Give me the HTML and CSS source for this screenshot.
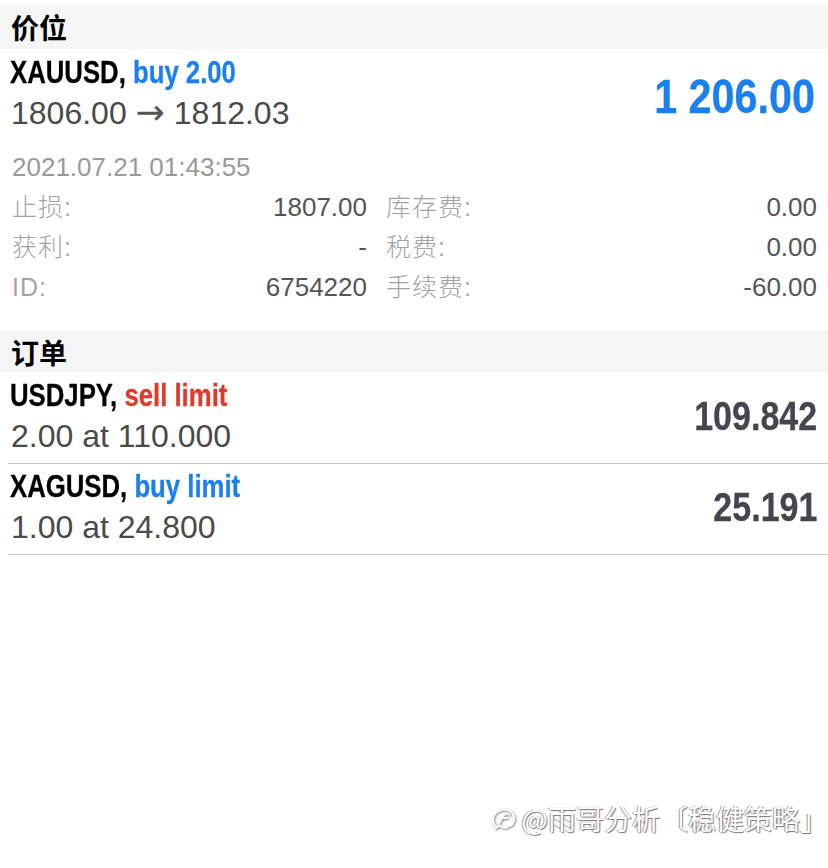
FILE: index.html
```html
<!DOCTYPE html>
<html lang="zh">

<head>
    <meta charset="UTF-8">
    <meta name="viewport" content="width=device-width, initial-scale=1.0">
    <title>交易</title>
    <link rel="stylesheet" href="styles.css">
</head>

<body>

    <h2 class="section-title first">价位</h2>

    <div class="position">
        <div class="position-head">
            <div>
                <div class="symbol">XAUUSD, <span class="buy">buy 2.00</span></div>
                <div class="prices">1806.00 <span class="arrow">→</span> 1812.03</div>
            </div>
            <div class="profit">1 206.00</div>
        </div>

        <div class="time">2021.07.21 01:43:55</div>

        <div class="details">
            <div class="field"><span class="label">止损:</span><span class="value">1807.00</span></div>
            <div class="field"><span class="label">库存费:</span><span class="value">0.00</span></div>
            <div class="field"><span class="label">获利:</span><span class="value">-</span></div>
            <div class="field"><span class="label">税费:</span><span class="value">0.00</span></div>
            <div class="field"><span class="label">ID:</span><span class="value">6754220</span></div>
            <div class="field"><span class="label">手续费:</span><span class="value">-60.00</span></div>
        </div>
    </div>

    <h2 class="section-title">订单</h2>

    <!-- Órdenes pendientes -->
    <div class="order">
        <div>
            <div class="symbol">USDJPY, <span class="sell">sell limit</span></div>
            <div class="prices">2.00 at 110.000</div>
        </div>
        <div class="price">109.842</div>
    </div>

    <div class="order">
        <div>
            <div class="symbol">XAGUSD, <span class="buy">buy limit</span></div>
            <div class="prices">1.00 at 24.800</div>
        </div>
        <div class="price">25.191</div>
    </div>

    <div class="watermark">
        <svg class="logo" width="26" height="26" viewBox="0 0 28 26">
            <path d="M6 22 C2 18 2 10 8 6 C13 3 20 3 24 8 C28 13 26 20 20 22 C16 24 12 23 10 21 L6 24 Z" fill="none" stroke="#fff" stroke-width="2"/>
            <path d="M9 19 C13 16 13 9 18 8 C20 8 21 9 21 10 M11 13 L19 13" fill="none" stroke="#fff" stroke-width="2"/>
        </svg>
        <span>@雨哥分析〔稳健策略」</span>
    </div>

</body>

</html>
```

FILE: styles.css
```css
body {
    font-family: 'Liberation Sans', Arial, 'Noto Sans CJK SC', sans-serif;
    background-color: #fff;
    margin: 0;
    padding: 0;
    color: #000;
    width: 828px;
    height: 868px;
    position: relative;
    overflow: hidden;
}

.section-title {
    margin: 0;
    background-color: #f5f5f5;
    height: 43px;
    line-height: 44px;
    padding-left: 11px;
    font-size: 28px;
    font-weight: bold;
    font-family: 'Noto Sans CJK SC', sans-serif;
}

.section-title.first {
    margin-top: 5px;
    height: 44px;
}

/* condensed bold, like the app's font */
.symbol,
.profit,
.price {
    display: inline-block;
    font-family: 'Liberation Sans', Arial, sans-serif;
    font-weight: bold;
    transform: scaleX(0.83);
    -webkit-text-stroke: 0.3px currentColor;
}

.symbol {
    font-size: 31px;
    line-height: 40px;
    margin-left: -1px;
    transform-origin: left center;
    white-space: nowrap;
}

.buy {
    color: #1a7ff0;
}

.sell {
    color: #e0392b;
}

.prices {
    font-size: 32px;
    line-height: 40px;
    height: 40px;
    color: #4a4a4a;
}

.arrow {
    font-family: 'DejaVu Sans', sans-serif;
    font-size: 35px;
    line-height: 1;
    color: #555;
}

.position {
    padding: 4px 11px 23px 11px;
}

.position-head {
    display: flex;
    justify-content: space-between;
    align-items: center;
}

.profit {
    font-size: 48px;
    color: #1a7ff0;
    padding-top: 6px;
    margin-right: 2px;
    transform: scaleX(0.86);
    transform-origin: right center;
}

.time {
    margin-top: 14px;
    font-size: 26px;
    line-height: 40px;
    color: #999;
    padding-left: 1px;
}

.details {
    display: grid;
    grid-template-columns: 355px 1fr;
    column-gap: 19px;
    padding-left: 1px;
}

.field {
    display: flex;
    justify-content: space-between;
    font-size: 26px;
    line-height: 40px;
}

.label {
    color: #a3a3a3;
    font-family: 'Liberation Sans', 'Noto Sans CJK SC', sans-serif;
    font-weight: 300;
    font-size: 25px;
    letter-spacing: 1px;
}

.value {
    color: #555;
}

.order {
    display: flex;
    justify-content: space-between;
    align-items: center;
    margin-left: 8px;
    padding: 3px 11px 7px 3px;
    border-bottom: 1px solid #c8c8c8;
}

.price {
    font-size: 41px;
    color: #45454f;
    transform-origin: right center;
}

.watermark {
    position: absolute;
    right: 0;
    top: 798px;
    display: flex;
    align-items: center;
    gap: 6px;
    color: #fff;
    font-family: 'Noto Sans CJK SC', sans-serif;
    font-size: 28px;
    text-shadow: 1px 1px 1px #777, -1px 0 1px #999;
}

.logo {
    filter: drop-shadow(1px 1px 1px #777);
}
```
